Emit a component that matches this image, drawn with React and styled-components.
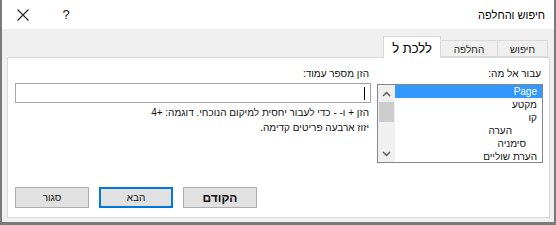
import React from "react";
import styled, { createGlobalStyle } from "styled-components";

const Global = createGlobalStyle`
  html, body { margin: 0; padding: 0; background: #ffffff; }
  * { box-sizing: border-box; }
`;

const FONT = `"Liberation Sans", "DejaVu Sans", Arial, sans-serif`;

const Window = styled.div`
  width: 556px;
  height: 225px;
  border-left: 2px solid #7a7a7a;
  border-right: 2px solid #7a7a7a;
  border-bottom: 3px solid #7a7a7a;
  display: flex;
  flex-direction: column;
  font-family: ${FONT};
  color: #000;
  background: #f0f0f0;
  overflow: hidden;
`;

const TitleBar = styled.div`
  height: 29px;
  background: #ffffff;
  display: flex;
  direction: rtl;
  align-items: center;
  flex-shrink: 0;
`;

const Title = styled.div`
  font-size: 11px;
  padding-right: 9px;
  margin-left: auto;
`;

const CtrlButton = styled.div`
  width: ${(p) => p.$w}px;
  height: 29px;
  display: flex;
  align-items: center;
  justify-content: center;
  font-size: 13px;
  color: #111;
`;

const Body = styled.div`
  flex: 1;
  display: flex;
  flex-direction: column;
  padding: 7px 4px 4px 5px;
`;

const TabStrip = styled.div`
  height: 21px;
  display: flex;
  direction: rtl;
  align-items: flex-end;
  padding-right: 2px;
  flex-shrink: 0;
`;

const Tab = styled.div`
  position: relative;
  width: ${(p) => p.$w}px;
  height: ${(p) => (p.$active ? 22 : 17)}px;
  margin-bottom: ${(p) => (p.$active ? -1 : 0)}px;
  margin-left: -1px;
  background: ${(p) => (p.$active ? "#ffffff" : "#f0f0f0")};
  border: 1px solid #d9d9d9;
  border-bottom: ${(p) => (p.$active ? "none" : "1px solid #d9d9d9")};
  z-index: ${(p) => (p.$active ? 2 : 1)};
  display: flex;
  align-items: center;
  justify-content: center;
  font-size: ${(p) => (p.$active ? 13 : 10)}px;
  color: ${(p) => (p.$active ? "#000" : "#222")};
  padding-top: 1px;
`;

const Panel = styled.div`
  flex: 1;
  background: #ffffff;
  border: 1px solid #d9d9d9;
  display: flex;
  direction: rtl;
  gap: 6px;
  padding: 9px 6px 9px 7px;
`;

const RightCol = styled.div`
  width: 166px;
  display: flex;
  flex-direction: column;
`;

const LeftCol = styled.div`
  flex: 1;
  display: flex;
  flex-direction: column;
`;

const Label = styled.div`
  font-size: 10px;
  line-height: 13px;
  height: ${(p) => p.$h}px;
  padding-right: ${(p) => p.$pr || 0}px;
  color: #111;
`;

const ListBox = styled.div`
  height: 79px;
  border: 1px solid #828790;
  display: flex;
  direction: rtl;
`;

const Items = styled.div`
  flex: 1;
  display: flex;
  flex-direction: column;
`;

const Item = styled.div`
  height: 13px;
  line-height: 13px;
  font-size: 10px;
  padding-right: ${(p) => p.$pr}px;
  background: ${(p) => (p.$sel ? "#3399ff" : "transparent")};
  color: ${(p) => (p.$sel ? "#ffffff" : "#111")};
  white-space: nowrap;
`;

const ScrollBar = styled.div`
  width: 17px;
  background: #f0f0f0;
  display: flex;
  flex-direction: column;
  align-items: center;
`;

const Arrow = styled.div`
  height: 17px;
  width: 17px;
  display: flex;
  align-items: center;
  justify-content: center;
`;

const Thumb = styled.div`
  width: 15px;
  height: 20px;
  background: #cdcdcd;
`;

const Track = styled.div`
  flex: 1;
`;

const InputBox = styled.div`
  height: 20px;
  border: 1px solid #a6a6a6;
  display: flex;
  direction: rtl;
  align-items: center;
  padding-right: 5px;
`;

const Caret = styled.div`
  width: 1px;
  height: 13px;
  background: #000;
`;

const Help = styled.div`
  font-size: 10px;
  line-height: 15px;
  margin-top: 2px;
  color: #111;
  padding-right: 2px;
`;

const Buttons = styled.div`
  margin-top: auto;
  display: flex;
  direction: rtl;
  justify-content: flex-end;
  gap: 10px;
`;

const Button = styled.div`
  width: 74px;
  height: 21px;
  background: #e1e1e1;
  border: ${(p) => (p.$default ? "2px solid #0078d7" : "1px solid #adadad")};
  display: flex;
  align-items: center;
  justify-content: center;
  font-size: ${(p) => (p.$big ? 12 : 10)}px;
  font-weight: ${(p) => (p.$big ? 700 : 400)};
  color: #111;
`;

const Chevron = ({ up }) => (
  <svg width="9" height="6" viewBox="0 0 9 6">
    <path
      d={up ? "M1 5 L4.5 1.5 L8 5" : "M1 1 L4.5 4.5 L8 1"}
      fill="none"
      stroke="#606060"
      strokeWidth="1.5"
    />
  </svg>
);

const items = [
  { t: "Page", sel: true, pr: 5 },
  { t: "מקטע", pr: 5 },
  { t: "קו", pr: 5 },
  { t: "הערה", pr: 30 },
  { t: "סימניה", pr: 16 },
  { t: "הערת שוליים", pr: 5 },
];

export default function App() {
  return (
    <>
      <Global />
      <Window>
        <TitleBar>
          <Title>חיפוש והחלפה</Title>
          <CtrlButton $w={46}>?</CtrlButton>
          <CtrlButton $w={41}>
            <svg width="12" height="12" viewBox="0 0 12 12">
              <path d="M0.5 0.5 L11.5 11.5 M11.5 0.5 L0.5 11.5" stroke="#222" strokeWidth="1.1" />
            </svg>
          </CtrlButton>
        </TitleBar>
        <Body>
          <TabStrip>
            <Tab $w={51}>חיפוש</Tab>
            <Tab $w={58}>החלפה</Tab>
            <Tab $w={58} $active>ללכת ל</Tab>
          </TabStrip>
          <Panel>
            <RightCol>
              <Label $h={17} $pr={2}>עבור אל מה:</Label>
              <ListBox>
                <Items>
                  {items.map((it) => (
                    <Item key={it.t} $sel={it.sel} $pr={it.pr}>
                      {it.t}
                    </Item>
                  ))}
                </Items>
                <ScrollBar>
                  <Arrow>
                    <Chevron up />
                  </Arrow>
                  <Thumb />
                  <Track />
                  <Arrow>
                    <Chevron />
                  </Arrow>
                </ScrollBar>
              </ListBox>
            </RightCol>
            <LeftCol>
              <Label $h={16} $pr={2}>הזן מספר עמוד:</Label>
              <InputBox>
                <Caret />
              </InputBox>
              <Help>
                הזן + ו- - כדי לעבור יחסית למיקום הנוכחי. דוגמה: +4
                <br />
                יזוז ארבעה פריטים קדימה.
              </Help>
              <Buttons>
                <Button $big>הקודם</Button>
                <Button $default>הבא</Button>
                <Button>סגור</Button>
              </Buttons>
            </LeftCol>
          </Panel>
        </Body>
      </Window>
    </>
  );
}
